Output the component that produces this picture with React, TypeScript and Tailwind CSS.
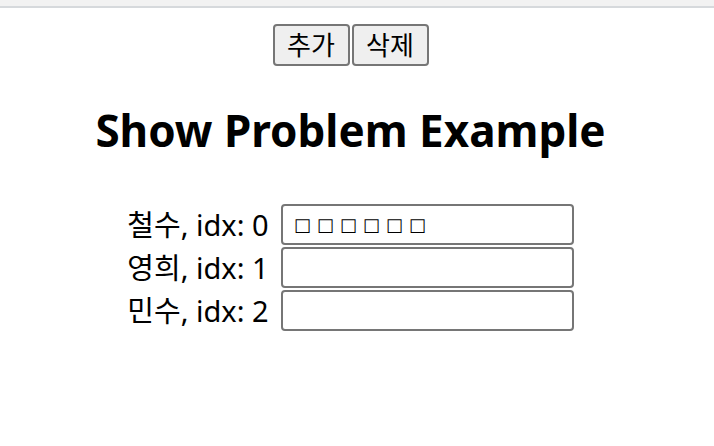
import { useState } from "react";

type IStudent = {
  name: string;
  value: string;
};

const initialStudents: IStudent[] = [
  { name: "철수", value: "□□□□□□" },
  { name: "영희", value: "" },
  { name: "민수", value: "" },
];

const App = () => {
  const [students, setStudents] = useState<IStudent[]>(initialStudents);

  const handleAdd = () => {
    setStudents([...students, { name: "새 학생", value: "" }]);
  };

  const handleDelete = () => {
    setStudents(students.slice(1));
  };

  const handleChange = (idx: number, value: string) => {
    setStudents(students.map((s, i) => (i === idx ? { ...s, value } : s)));
  };

  return (
    <div className="w-[714px] h-[446px] bg-white text-black font-['Noto_Sans','Noto_Sans_CJK_KR',sans-serif]">
      <div className="h-[8px] bg-[#f2f2f2] border-b-2 border-[#d6d9dc]" />
      <div className="w-[701px]">
        <div className="flex justify-center gap-[2px] mt-[16px]">
          <button
            onClick={handleAdd}
            className="w-[77px] h-[42px] text-[26px] leading-none bg-[#efefef] border-2 border-[#767676] rounded-[4px]"
          >
            추가
          </button>
          <button
            onClick={handleDelete}
            className="w-[77px] h-[42px] text-[26px] leading-none bg-[#efefef] border-2 border-[#767676] rounded-[4px]"
          >
            삭제
          </button>
        </div>
        <h1 className="text-center text-[44px] font-bold leading-none mt-[42px]">
          Show Problem Example
        </h1>
        <div className="flex flex-col items-center mt-[51px]">
          {students.map((student, idx) => (
            <div key={idx} className="flex items-center gap-[12px] h-[43px]">
              <span className="text-[29px] leading-none">
                {student.name}, idx: {idx}
              </span>
              <input
                value={student.value}
                onChange={(e) => handleChange(idx, e.target.value)}
                className="w-[293px] h-[41px] px-[11px] text-[18px] font-bold border-2 border-[#767676] rounded-[4px] font-['DejaVu_Sans',sans-serif] tracking-[6px]"
              />
            </div>
          ))}
        </div>
      </div>
    </div>
  );
};

export default App;
